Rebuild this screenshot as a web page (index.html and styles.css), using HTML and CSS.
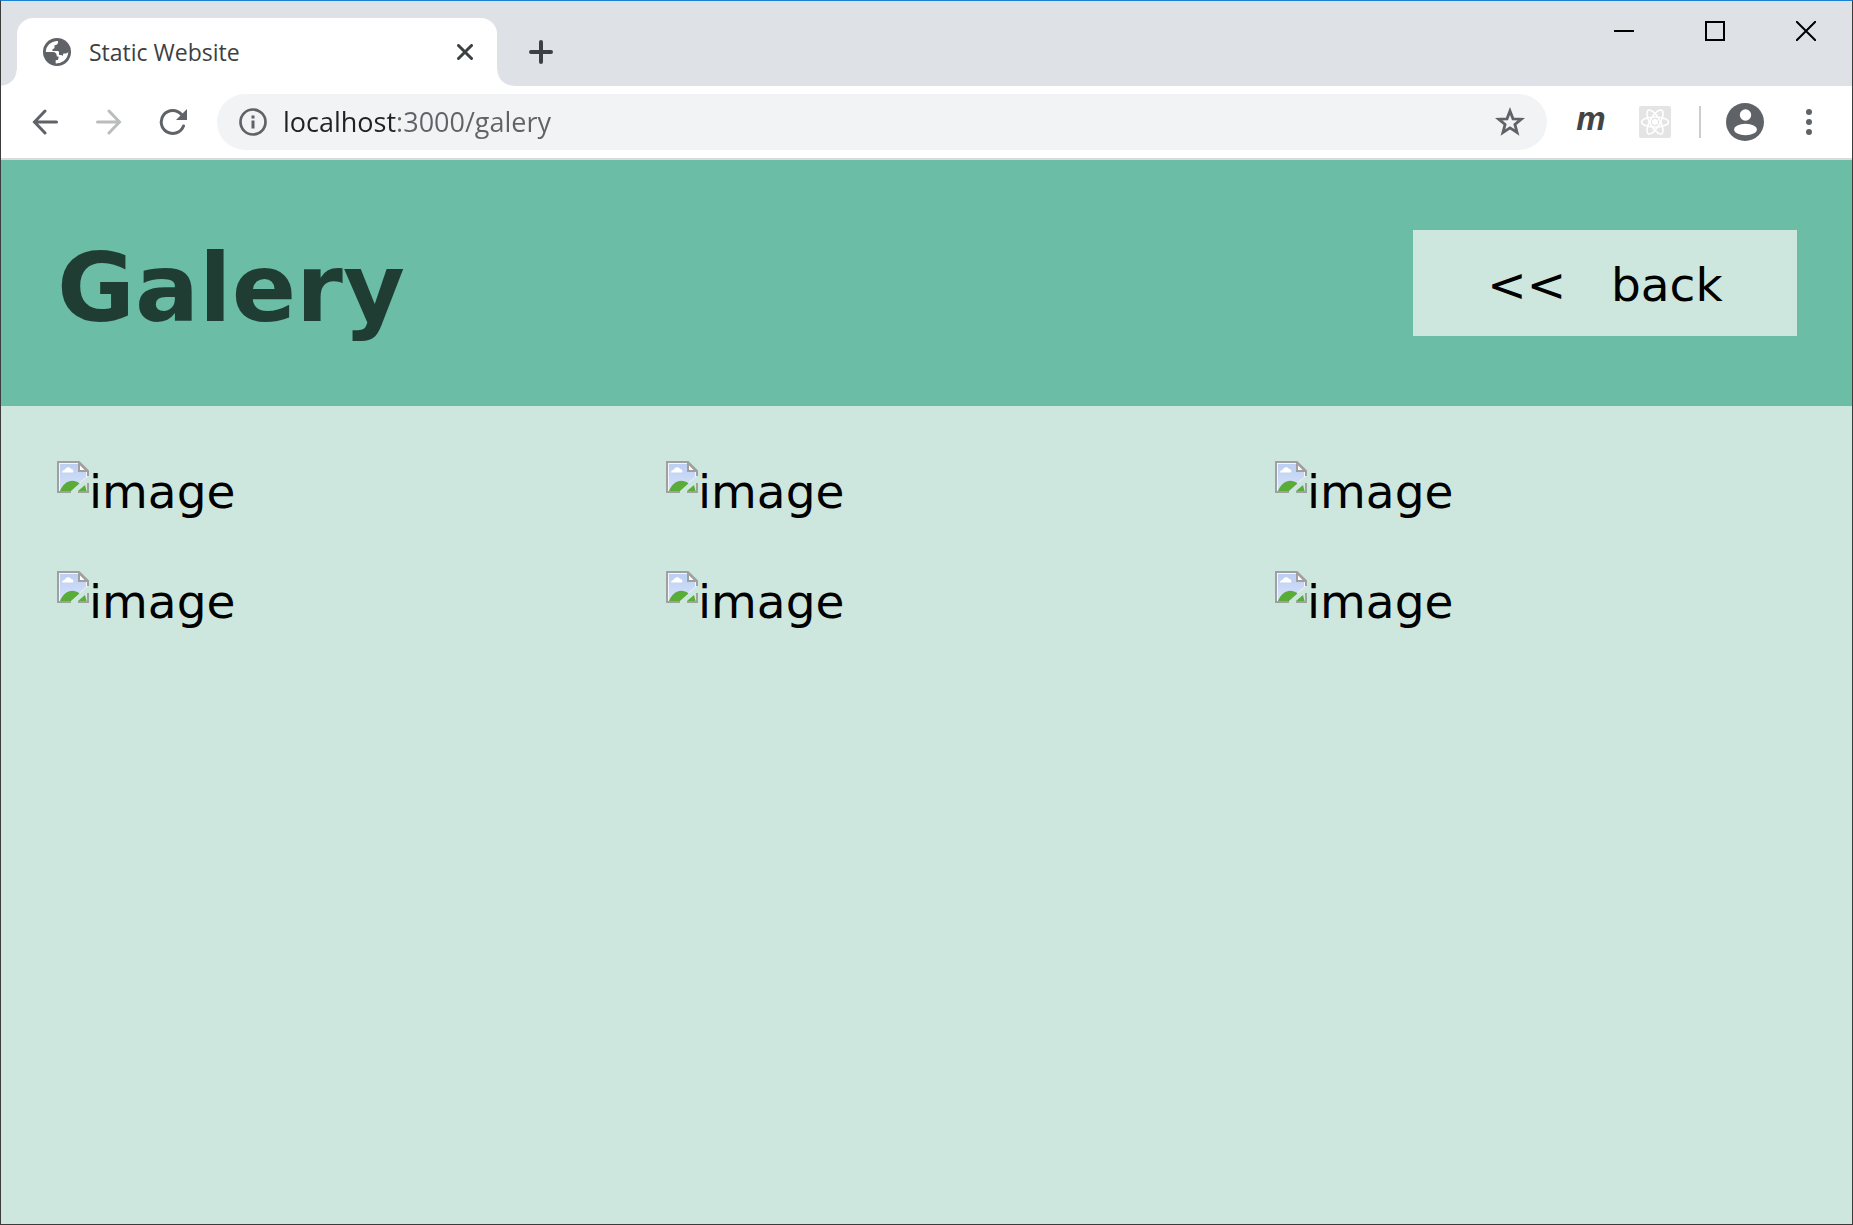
FILE: index.html
```html
<!DOCTYPE html>
<html lang="en">
<head>
<meta charset="utf-8">
<title>Static Website</title>
<link rel="stylesheet" href="styles.css">
</head>
<body>
<svg class="defs" aria-hidden="true">
  <defs>
    <linearGradient id="sky" x1="0" y1="0" x2="0" y2="1">
      <stop offset="0" stop-color="#bccff2"/>
      <stop offset="1" stop-color="#d6e2fa"/>
    </linearGradient>
    <symbol id="missing" viewBox="0 0 32 32">
      <path d="M1 1H22L31 10V15L13 31H1Z" fill="#f4f6fb"/>
      <path d="M3 3H21V11H29V16L13 30H3Z" fill="url(#sky)"/>
      <path d="M5 11.500C5 9.500 7 9 8 8.500C9 5.500 13 5.500 14 8C16 8 17 10 16 11.500Z" fill="#fff"/>
      <path d="M3 30C6 22 13 18 19 20.500C21 21 22 22 22.500 22.500L14 30Z" fill="#5aac38"/>
      <path d="M21 30L28 24L29.500 30Z" fill="#5aac38"/>
      <path d="M14 31H1V1H22L31 10V15M31 22V31H21" fill="none" stroke="#a0a0a0" stroke-width="2"/>
      <path d="M22 2V10H30Z" fill="#fff" stroke="#a0a0a0" stroke-width="2"/>
    </symbol>
  </defs>
</svg>
<div class="window">
  <div class="titlebar">
    <div class="tab">
      <svg width="28" height="28" viewBox="0 0 28 28" aria-hidden="true"><circle cx="14" cy="14" r="14" fill="#5f6368"/><path fill="#fff" d="M2.800 14C2.800 8 8 2.800 15 3V4.500C15 6 14 7 11.500 7.200V9.500C11.500 10.500 11 10.800 9.500 11V13H14.500C15.500 13 16 13.500 16 14.500V17H18C19 17 19.500 18 20 19L17 24.800C15 25.300 13.500 25.400 12 25V22.500C10.500 22.300 9.500 21 9.500 19.500V18L5.500 14Z"/><path fill="#5f6368" d="M2.800 14H10C12.500 14 13.800 15.500 13.800 18.500H15.500V20.500C15.500 21.800 14.500 22.300 12.800 22.300V25.500H8L2.800 19Z"/><path fill="#fff" d="M12.800 25.200V22.400C14.800 22.400 16 21.500 16 20V18.400H18.500C19.500 18.400 20 17 20.500 15.500H23C24 15.500 24.800 14.800 25.200 13.500C25.400 20 20 25.700 12.800 25.200Z"/></svg>
      <span class="tab-title">Static Website</span>
      <button class="tab-close" aria-label="Close tab"><svg width="16" height="16" viewBox="0 0 16 16"><path d="M1.500 1.500l13 13M14.500 1.500l-13 13" stroke="#3c4043" stroke-width="3" stroke-linecap="round"/></svg></button>
    </div>
    <button class="new-tab" aria-label="New tab"><svg width="24" height="24" viewBox="0 0 24 24"><path d="M12 2v20M2 12h20" stroke="#3c4043" stroke-width="4" stroke-linecap="round"/></svg></button>
    <div class="controls">
      <button aria-label="Minimize"><svg width="20" height="20"><path d="M0 10h20" stroke="#000" stroke-width="2"/></svg></button>
      <button aria-label="Maximize"><svg width="20" height="20"><path d="M1 1h18v18H1z" fill="none" stroke="#000" stroke-width="2"/></svg></button>
      <button aria-label="Close"><svg width="20" height="20"><path d="M0 0l20 20M20 0L0 20" stroke="#000" stroke-width="2"/></svg></button>
    </div>
  </div>
  <div class="toolbar">
    <nav class="nav">
      <button aria-label="Back"><svg width="26" height="26" viewBox="0 0 26 26"><path d="M24.500 13H3M13 2L2.500 13L13 24" fill="none" stroke="#5f6368" stroke-width="3" stroke-linecap="round"/></svg></button>
      <button aria-label="Forward"><svg width="26" height="26" viewBox="0 0 26 26"><path d="M1.500 13H23M13 2L23.500 13L13 24" fill="none" stroke="#babcbe" stroke-width="3" stroke-linecap="round"/></svg></button>
      <button aria-label="Reload"><svg width="28" height="28" viewBox="0 0 28 28"><path d="M24.500 18A11.500 11.500 0 1 1 22.500 6.500" fill="none" stroke="#5f6368" stroke-width="3" stroke-linecap="round"/><path d="M28 1V12H17Z" fill="#5f6368"/></svg></button>
    </nav>
    <div class="omnibox">
      <svg width="28" height="28" viewBox="0 0 28 28" aria-hidden="true"><circle cx="14" cy="14" r="12.500" fill="none" stroke="#5f6368" stroke-width="2.700"/><path d="M14 7.500v3M14 12.500v8" stroke="#5f6368" stroke-width="3"/></svg>
      <input class="url" type="text" aria-label="Address" value="localhost:3000/galery">
      <button class="star" aria-label="Bookmark"><svg width="30" height="30" viewBox="0 0 30 30"><path fill="none" stroke="#5f6368" stroke-width="2.800" d="M15 4L18 11.800L26.300 12.200L19.900 17.400L22.100 25.500L15 20.900L7.900 25.500L10.100 17.400L3.700 12.200L12 11.800Z"/></svg></button>
    </div>
    <div class="extensions">
      <button class="ext-m">m</button>
      <button aria-label="React"><svg width="32" height="32" viewBox="0 0 32 32"><rect width="32" height="32" rx="2" fill="#e4e4e4"/><g fill="none" stroke="#fff" stroke-width="1.600"><ellipse cx="16" cy="16" rx="13.500" ry="5"/><ellipse cx="16" cy="16" rx="13.500" ry="5" transform="rotate(60 16 16)"/><ellipse cx="16" cy="16" rx="13.500" ry="5" transform="rotate(120 16 16)"/></g><circle cx="16" cy="16" r="3" fill="#fff"/></svg></button>
      <span class="separator"></span>
      <button aria-label="Profile"><svg width="38" height="38" viewBox="0 0 38 38"><circle cx="19" cy="19" r="19" fill="#5f6368"/><circle cx="19.500" cy="12" r="5.700" fill="#fff"/><ellipse cx="19.500" cy="26.500" rx="11.500" ry="5.700" fill="#fff"/></svg></button>
      <button aria-label="Menu"><svg width="6" height="26" viewBox="0 0 6 26"><g fill="#5f6368"><circle cx="3" cy="3" r="3"/><circle cx="3" cy="13" r="3"/><circle cx="3" cy="23" r="3"/></g></svg></button>
    </div>
  </div>
  <div class="page">
    <header class="page-header">
      <h1>Galery</h1>
      <a class="back" href="#">&lt;&lt; &nbsp; back</a>
    </header>
    <main class="gallery">
      <div class="item"><svg width="32" height="32"><use href="#missing"/></svg><span>image</span></div>
      <div class="item"><svg width="32" height="32"><use href="#missing"/></svg><span>image</span></div>
      <div class="item"><svg width="32" height="32"><use href="#missing"/></svg><span>image</span></div>
      <div class="item"><svg width="32" height="32"><use href="#missing"/></svg><span>image</span></div>
      <div class="item"><svg width="32" height="32"><use href="#missing"/></svg><span>image</span></div>
      <div class="item"><svg width="32" height="32"><use href="#missing"/></svg><span>image</span></div>
    </main>
  </div>
</div>
</body>
</html>
```
FILE: styles.css
```css
* { box-sizing: border-box; }

body {
  margin: 0;
  font-family: "Open Sans", "Noto Sans", sans-serif;
}

svg { display: block; flex: none; }

.defs { position: absolute; width: 0; height: 0; }

button {
  display: flex;
  align-items: center;
  justify-content: center;
  padding: 0;
  border: 0;
  background: none;
}

.window {
  display: flex;
  flex-direction: column;
  min-height: 100vh;
  border: 1px solid #3c3c3c;
  border-top-color: #1a82d6;
  background: #fff;
}

/* Title bar */
.titlebar {
  display: flex;
  padding: 0 0 0 16px;
  background: #dee1e6;
}

.tab {
  position: relative;
  display: flex;
  align-items: center;
  width: 480px;
  height: 68px;
  margin-top: 17px;
  padding: 0 20px 0 26px;
  border-radius: 16px 16px 0 0;
  background: #fff;
}

.tab::before,
.tab::after {
  content: "";
  position: absolute;
  bottom: 0;
  width: 16px;
  height: 16px;
}

.tab::before {
  right: 100%;
  background: radial-gradient(circle at 0 0, transparent 15px, #fff 16px);
}

.tab::after {
  left: 100%;
  background: radial-gradient(circle at 100% 0, transparent 15px, #fff 16px);
}

.tab-title {
  flex: 1;
  margin-left: 18px;
  font-size: 23px;
  line-height: 32px;
  color: #3c4043;
}

.tab-close { width: 24px; height: 24px; }

.new-tab {
  width: 56px;
  height: 68px;
  margin: 17px 0 0 16px;
}

.controls { display: flex; margin-left: auto; padding-right: 1px; }
.controls button { width: 91px; height: 60px; }

/* Toolbar */
.toolbar {
  display: flex;
  align-items: center;
  padding: 8px 11px 8px 16px;
  border-bottom: 2px solid #d9dbdf;
}

.nav { display: flex; gap: 8px; margin-right: 16px; }
.nav button { width: 56px; height: 56px; }

.omnibox {
  display: flex;
  flex: 1;
  align-items: center;
  height: 56px;
  padding: 0 22px;
  border-radius: 28px;
  background: #f1f3f4;
}

.url {
  flex: 1;
  min-width: 0;
  height: 40px;
  margin-left: 16px;
  padding: 0;
  border: 0;
  outline: 0;
  font: 27px/40px "Open Sans", "Noto Sans", sans-serif;
  color: transparent;
  background: linear-gradient(90deg, #202124 114px, #5f6368 114px);
  background-clip: text;
  -webkit-background-clip: text;
}

.extensions { display: flex; align-items: center; margin-left: 12px; }
.extensions button { width: 64px; height: 56px; }

.extensions .ext-m {
  font: italic bold 33px/40px "Liberation Sans", Arial, sans-serif;
  color: #444;
  padding-bottom: 6px;
}

.separator {
  width: 2px;
  height: 32px;
  margin: 0 12px;
  background: #cccdcf;
}

/* Page */
.page {
  flex: 1;
  font-family: Verdana, "DejaVu Sans", sans-serif;
  font-size: 47px;
  background: #cde7de;
}

.page-header {
  display: flex;
  align-items: center;
  justify-content: space-between;
  padding: 70px 55px 70px 56px;
  background: #6bbea5;
}

h1 {
  margin: 0;
  padding-top: 10px;
  font-size: 95px;
  line-height: 96px;
  color: #1f3d33;
}

.back {
  width: 384px;
  padding: 26px 0 22px;
  line-height: 58px;
  text-align: center;
  text-decoration: none;
  color: #000;
  background: #cde7de;
}

.gallery {
  display: grid;
  grid-template-columns: repeat(3, 30%);
  justify-content: space-between;
  row-gap: 48px;
  padding: 55px 55px 55px 56px;
}

.item { display: flex; line-height: 62px; }
```
